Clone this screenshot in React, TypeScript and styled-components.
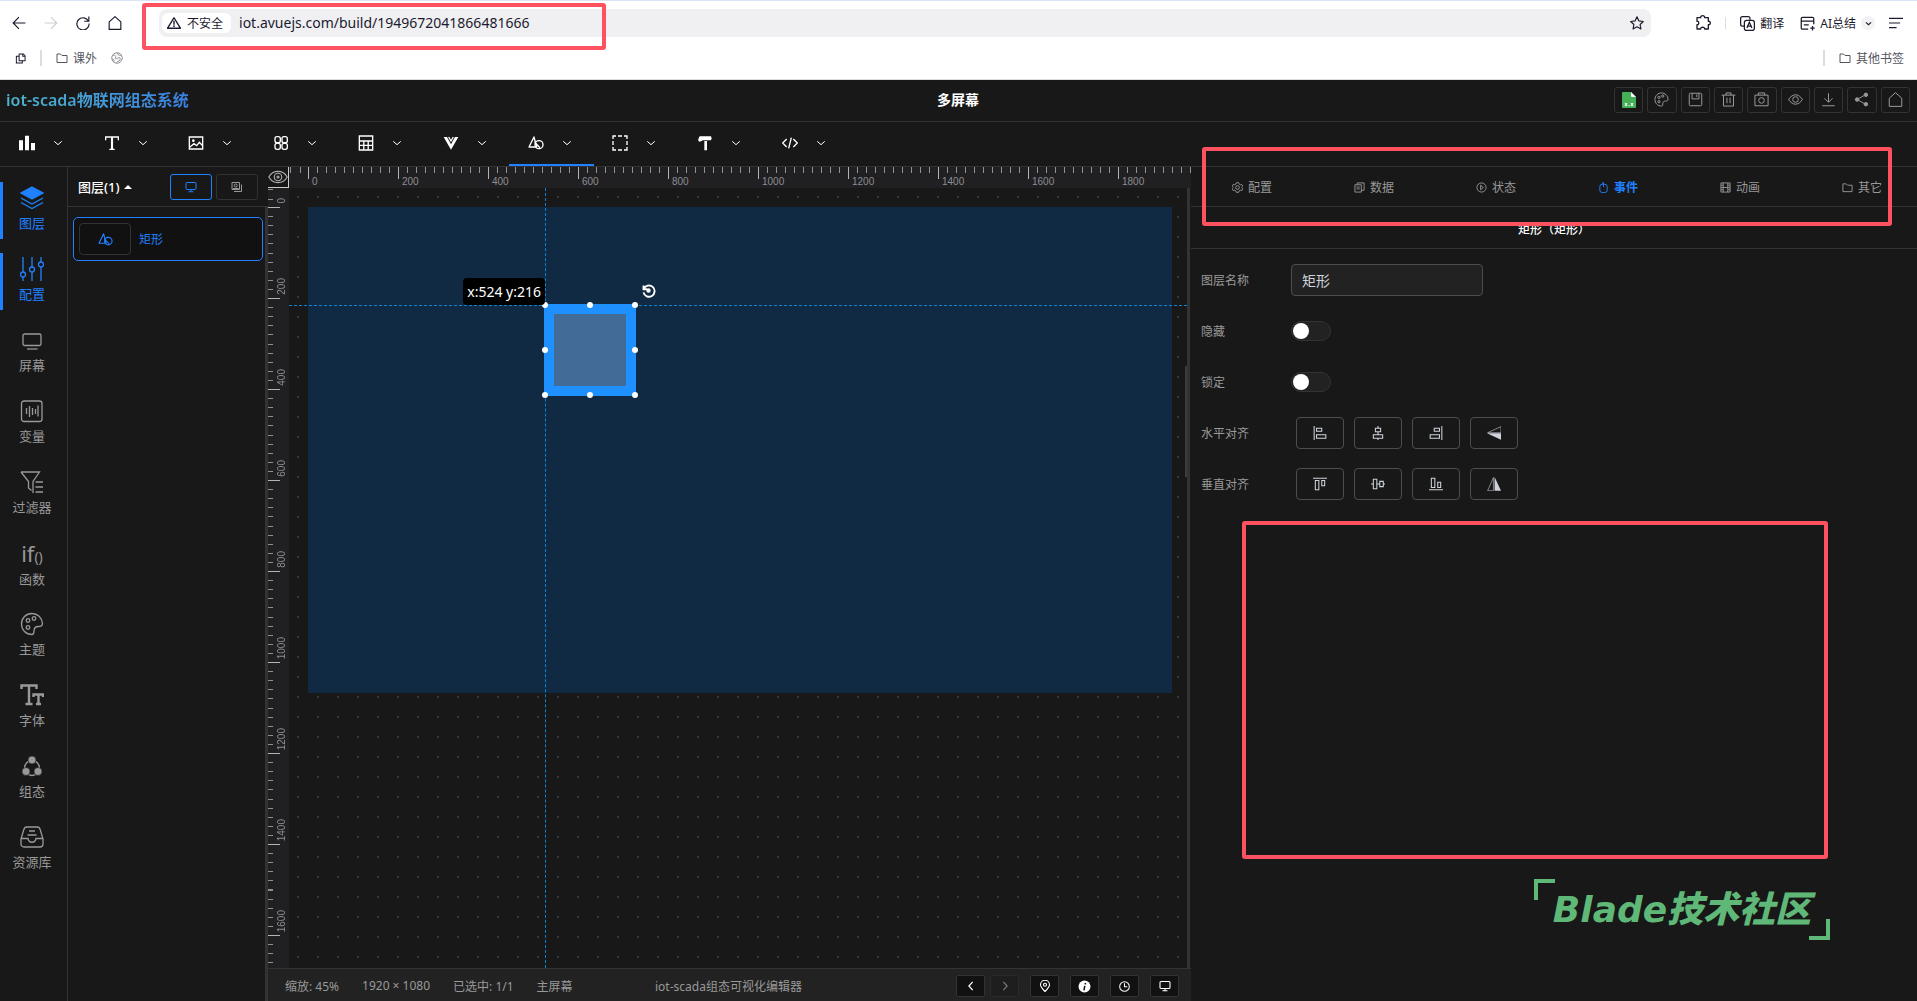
import React, { useState } from "react";
import styled, { createGlobalStyle, css } from "styled-components";

const ACCENT = "#2080ff";
const MARK = "#ff5260";
const LINE = "#333333";

const Global = createGlobalStyle`
  * { box-sizing: border-box; }
  html, body { margin: 0; background: #181818; }
  body, button, input { font-family: "Noto Sans", "Noto Sans CJK SC", sans-serif; }
  button { padding: 0; border: 0; background: none; color: inherit; cursor: pointer; }
  svg { display: block; flex: none; }
`;

/* ---------- icons ---------- */

type IconProps = { size?: number; w?: number; sw?: number; children: React.ReactNode; box?: number };
const Icon = ({ size = 16, w, sw = 1.5, box = 24, children }: IconProps) => (
  <svg width={w ?? size} height={size} viewBox={`0 0 ${box} ${box}`} fill="none" stroke="currentColor" strokeWidth={sw} aria-hidden="true">
    {children}
  </svg>
);

const glyph = {
  back: <path d="M23 12H2M12 2 2 12l10 10" />,
  forward: <path d="M1 12h21M12 2l10 10-10 10" />,
  reload: <path d="M21.5 9A10.5 10.5 0 1 0 22.500 13M22 1v8h-8" />,
  home: <path d="M2 10 12 1l10 9v13H2z" strokeLinejoin="round" />,
  warn: <path d="M12 3 23 21H1zM12 8v7M12 16v3" strokeLinejoin="round" />,
  star: <path d="m12 1.500 3.300 6.900 7.500 1-5.500 5.200 1.400 7.500-6.700-3.700-6.700 3.700 1.400-7.500-5.500-5.200 7.500-1z" strokeLinejoin="round" />,
  puzzle: <path d="M3 4h5.500c-1-4 7-4 6 0H20v5.500c4-1 4 6 0 5V21h-5.500c1-3.500-7-3.500-6 0H3v-6.500c3.500 1 3.500-6 0-5z" strokeLinejoin="round" />,
  translate: (
    <>
      <path d="M7 16H4a3 3 0 0 1-3-3V4a3 3 0 0 1 3-3h9a3 3 0 0 1 3 3v2" />
      <rect x="7" y="7" width="16" height="16" rx="3.500" />
      <path d="m11 19 4-9 4 9M12.500 16h5" />
    </>
  ),
  summary: <path d="M13 21H4a2 2 0 0 1-2-2V4a2 2 0 0 1 2-2h16a2 2 0 0 1 2 2v9M2 8h20M6 14h8M20 16v7M16.500 19.500h7" />,
  menu: <path d="M0 4h24M0 12h19M0 20h13" />,
  chevron: <path d="m3 8 9 8 9-8" />,
  tabs: (
    <>
      <path d="M9 2h9l4 4v11H9z" strokeLinejoin="round" />
      <path d="M9 7H3v15h13v-5M17 2v5h5" />
    </>
  ),
  folder: <path d="M2 21V4h7l3 3h10v14z" strokeLinejoin="round" />,
  globe: (
    <>
      <circle cx="12" cy="12" r="10.500" />
      <path d="M3 7c4-2 8 0 6 4s2 3 5 1 6 0 4 4-6 2-7 5M13 2c-1 4 3 5 8 4M2 14c3 0 4 2 4 6" />
    </>
  ),
  palette: (
    <>
      <path d="M12 1.500C6 1.500 1.500 6 1.500 12S6 22.500 12 22.500c2 0 2-1.500 2-3.500 0-3 1.500-4.500 4.500-4.500 2.500 0 4-.500 4-3C22 5.500 17.500 1.500 12 1.500z" />
      <circle cx="8" cy="8.500" r="1.800" />
      <circle cx="14" cy="6.500" r="1.800" />
      <circle cx="8" cy="15.500" r="1.800" />
    </>
  ),
  save: (
    <>
      <rect x="2" y="2" width="20" height="20" rx="2" />
      <path d="M6.500 2v9h11V2M14 4v4" />
    </>
  ),
  trash: <path d="M1 5h22M8 5V1.500h8V5M4 5v17.500h16V5M9.500 9v9M14.500 9v9" />,
  camera: (
    <>
      <path d="M1.500 5h21v17h-21zM7 5V1.500h10V5" />
      <circle cx="12" cy="13.500" r="4.500" />
    </>
  ),
  eye: (
    <>
      <path d="M1 12c6-10 16-10 22 0-6 10-16 10-22 0z" />
      <circle cx="12" cy="12" r="4.500" />
    </>
  ),
  eyeDot: (
    <>
      <path d="M1 12C6 3 18 3 23 12 18 21 6 21 1 12z" />
      <circle cx="12" cy="12" r="4.500" />
      <circle cx="12" cy="12" r="1.200" />
    </>
  ),
  download: <path d="M12 2v14M5.500 10l6.500 6.500 6.500-6.500M2 22h20" />,
  share: (
    <>
      <path d="M19 4 5 12l14 8" />
      <circle cx="19" cy="4.500" r="2.800" fill="currentColor" />
      <circle cx="5" cy="12" r="2.800" fill="currentColor" />
      <circle cx="19" cy="19.500" r="2.800" fill="currentColor" />
    </>
  ),
  chart: <path d="M0 8h6v15H0zM9 1h6v22H9zM18 12h6v11h-6z" fill="currentColor" stroke="none" />,
  type: (
    <>
      <path d="M2.500 8V3h19v5M8 21.500h8" />
      <path d="M12 3v18" strokeWidth="3.200" />
    </>
  ),
  image: (
    <>
      <path d="M2 3h20v18H2zM3 18l6-5 4 3 4-5 5 5" />
      <circle cx="8" cy="8.500" r="1" />
    </>
  ),
  rings: (
    <>
      <rect x="3" y="2.500" width="8" height="9" rx="3" />
      <rect x="13.500" y="2.500" width="8" height="9" rx="3" />
      <rect x="3" y="12.500" width="8" height="9" rx="3" />
      <rect x="13.500" y="12.500" width="8" height="9" rx="3" />
    </>
  ),
  calc: <path d="M2 1.500h20v21H2zM2 9h20M2 15.500h20M8.700 9v13M15.300 9v13" />,
  vee: (
    <>
      <path d="M1 3h5l6 11 6-11h5L12 22z" fill="currentColor" stroke="none" />
      <path d="M8.500 3 12 9l3.500-6" />
    </>
  ),
  shapes: (
    <>
      <path d="M9 3 1.500 18H13L9 3z" strokeLinejoin="round" />
      <circle cx="16.500" cy="14.500" r="6" />
      <path d="m10 11 8 8" />
    </>
  ),
  marquee: (
    <>
      <path d="M1.500 6V1.500H6M18 1.500h4.500V6M22.500 18v4.500H18M6 22.500H1.500V18" />
      <path d="M9 1.500h6M9 22.500h6M1.500 9v6M22.500 9v6" />
    </>
  ),
  paint: <path d="M4 2h17l1 3-1 3H9L4 10 2 9V6zM11 9h4v14h-4z" fill="currentColor" stroke="none" />,
  code: <path d="m7 6-6 6 6 6M17 6l6 6-6 6M14 4l-4 16" />,
  layers: (
    <>
      <path d="M12 1 23 7 12 13 1 7z" fill="currentColor" />
      <path d="m1 12 11 6 11-6M1 16.500l11 6 11-6" />
    </>
  ),
  sliders: (
    <>
      <path d="M3 0v15M3 20v4M12 0v10M12 15v9M21 0v5M21 10v14" />
      <circle cx="3" cy="17.500" r="2.500" />
      <circle cx="12" cy="12.500" r="2.500" />
      <circle cx="21" cy="7.500" r="2.500" />
    </>
  ),
  screen: (
    <>
      <rect x="3" y="6" width="18" height="11.500" rx="1.500" />
      <path d="M7 21h10.500" />
    </>
  ),
  variable: (
    <>
      <rect x="1.500" y="2" width="20.500" height="20.500" rx="2.500" />
      <path d="M6.500 9v6M9.500 7v11M12.500 9v7M15.500 10v5M18 6.500v11" />
    </>
  ),
  filter: <path d="M1 2h18.500L13 11.500V23M1 2l7.500 9.500V18l3 2.500M15.500 12h7.500M15.500 17h7.500M15.500 22h7.500" />,
  fonts: <path d="M1.500 6V2.500h15V6M9 2.500v18M5.500 21h7M13.500 14v-2.500h9.500V14M18.500 11.500V21M16 21h5" strokeWidth="2.400" />,
  nodes: (
    <>
      <circle cx="12" cy="14" r="7.500" />
      <circle cx="12" cy="6" r="4" fill="currentColor" stroke="#181818" strokeWidth=".6" />
      <circle cx="6" cy="17.500" r="4" fill="currentColor" stroke="#181818" strokeWidth=".6" />
      <circle cx="18" cy="17.500" r="4" fill="currentColor" stroke="#181818" strokeWidth=".6" />
    </>
  ),
  library: (
    <>
      <path d="M1 14 4 4a3 3 0 0 1 3-2h10a3 3 0 0 1 3 2l3 10v5a3 3 0 0 1-3 3H4a3 3 0 0 1-3-3zM1 13.500h7c1 5 7 5 8 0h7" />
      <path d="M9 6h6M7.500 10h9" />
    </>
  ),
  monitor: (
    <>
      <rect x="2" y="3" width="20" height="14" rx="2" />
      <path d="M12 17v4M7 21.500h10" />
    </>
  ),
  group: (
    <>
      <path d="M2 3h15v14H2zM6 21h15V7" />
      <circle cx="9.500" cy="9" r="3" />
      <path d="M4 15h11" />
    </>
  ),
  gear: (
    <>
      <path d="M9.500 1.500h5l1 3 3 1.500 3-.500 2 4-2 2.500 2 2.500-2 4-3-.500-3 1.500-1 3h-5l-1-3-3-1.500-3 .500-2-4 2-2.500-2-2.500 2-4 3 .500 3-1.500z" strokeLinejoin="round" />
      <circle cx="12" cy="12" r="4" />
    </>
  ),
  data: <path d="M2 6h14v16H2zM7 6V2h15v16h-6M5.500 11h7M5.500 15h7" />,
  play: (
    <>
      <circle cx="12" cy="12" r="10" />
      <path d="m10 7 6 5-6 5z" />
    </>
  ),
  mouse: (
    <>
      <rect x="4" y="5" width="16" height="18" rx="5" />
      <path d="M12 1v10M8 2h4" />
    </>
  ),
  film: <path d="M2 2h20v20H2zM7 2v20M17 2v20M7 12h10M2 7h5M2 12h5M2 17h5M17 7h5M17 12h5M17 17h5" />,
  left: <path d="M16 2 7 12l9 10" />,
  right: <path d="m8 2 9 10-9 10" />,
  pin: (
    <>
      <path d="M12 23C6 17 3 13 3 9.500a9 9 0 0 1 18 0C21 13 18 17 12 23z" />
      <circle cx="12" cy="9.500" r="3" />
    </>
  ),
  info: (
    <>
      <circle cx="12" cy="12" r="11" fill="currentColor" stroke="none" />
      <path d="M13.500 5.500v3M12.500 11l-1.500 8" stroke="#111" strokeWidth="2.800" />
    </>
  ),
  clock: (
    <>
      <circle cx="12" cy="12" r="10.500" />
      <path d="M12 5v7.500h6" />
    </>
  ),
  rotate: (
    <>
      <path d="M4 4v6h6M4.500 9.500A9 9 0 1 1 4 15" />
      <circle cx="12" cy="12" r="2" fill="currentColor" />
    </>
  ),
  alLeft: <path d="M2 0v24M6 4h9v5H6zM6 15h16v6H6z" />,
  alCenter: <path d="M12 0v4M12 10v5M12 21v3M7.500 4h9v6h-9zM4 15h16v6H4z" />,
  alRight: <path d="M22 0v24M9 4h9v5H9zM2 15h16v6H2z" />,
  alTop: <path d="M0 2h24M4 6h6v16H4zM15 6h5v9h-5z" />,
  alMiddle: <path d="M0 12h4M10 12h5M21 12h3M4 4h6v16H4zM15 7.500h6v9h-6z" />,
  alBottom: <path d="M0 22h24M4 2h6v16H4zM15 9h5v9h-5z" />,
  flipV: (
    <>
      <path d="M24 1 1 11.500h23z" strokeWidth="1" />
      <path d="M24 23.500 0 12.500h24z" fill="currentColor" stroke="none" />
    </>
  ),
  flipH: (
    <>
      <path d="M1 23.500 11 1v22.500z" strokeWidth="1" />
      <path d="M24 23.500 13 0v23.500z" fill="currentColor" stroke="none" />
    </>
  ),
};
type GlyphName = keyof typeof glyph;

/* ---------- frame ---------- */

const Page = styled.div`
  position: relative;
  display: flex;
  flex-direction: column;
  height: 100vh;
  min-width: 1400px;
  overflow: hidden;
  color: #999;
  background: #181818;
  font-size: 12px;
`;

const Marker = styled.div`
  position: absolute;
  z-index: 5;
  border: 4px solid ${MARK};
  border-radius: 3px;
  pointer-events: none;
`;
const UrlMarker = styled(Marker)`
  top: 3px;
  left: 142px;
  width: 464px;
  height: 47px;
`;
const TabsMarker = styled(Marker)`
  top: -20px;
  left: 11px;
  right: 25px;
  height: 79px;
`;
const AreaMarker = styled(Marker)`
  top: 354px;
  left: 51px;
  right: 89px;
  height: 338px;
`;

/* ---------- browser ---------- */

const Browser = styled.header`
  flex: none;
  height: 80px;
  background: #fff;
  border-top: 1px solid #dbe3f6;
  border-bottom: 1px solid #dcdcdf;
  color: #1c1b2e;
`;
const NavRow = styled.div`
  display: flex;
  align-items: center;
  height: 44px;
  padding: 0 14px 0 12px;
`;
const NavGroup = styled.div`
  display: flex;
  gap: 18px;
  margin-right: 37px;
`;
const NavButton = styled.button<{ $tone?: string }>`
  color: ${(p) => p.$tone ?? "#1c1b2e"};
`;
const Address = styled.div`
  flex: 1;
  display: flex;
  align-items: center;
  gap: 8px;
  height: 28px;
  padding: 0 7px 0 3px;
  border-radius: 8px;
  background: #f0f0f3;
`;
const Unsafe = styled.button`
  display: flex;
  align-items: center;
  gap: 6px;
  height: 20px;
  padding: 0 8px 0 5px;
  border-radius: 6px;
  background: #fff;
  font-size: 12px;
`;
const UrlInput = styled.input`
  flex: 1;
  height: 24px;
  padding: 0 0 2px;
  border: 0;
  outline: 0;
  background: transparent;
  color: #1c1b2e;
  font-size: 14px;
`;
const Extras = styled.div`
  display: flex;
  align-items: center;
  margin-left: 44px;
  gap: 14px;
`;
const Rule = styled.span<{ $h: number; $w?: number }>`
  width: ${(p) => p.$w ?? 1}px;
  height: ${(p) => p.$h}px;
  background: #dddde1;
`;
const TextButton = styled.button`
  display: flex;
  align-items: center;
  gap: 5px;
  font-size: 12px;
`;
const ExtraLink = styled(TextButton)`
  & + & { margin-left: 2px; }
`;
const Round = styled.span`
  display: grid;
  place-items: center;
  width: 14px;
  height: 14px;
  border-radius: 50%;
  background: #f2f2f4;
`;
const Bookmarks = styled.div`
  display: flex;
  align-items: center;
  gap: 14px;
  height: 26px;
  padding: 0 13px 0 15px;
  color: #55555f;
`;
const Spring = styled.span`
  flex: 1;
`;

/* ---------- app header ---------- */

const AppHeader = styled.div`
  flex: none;
  display: grid;
  grid-template-columns: 1fr auto 1fr;
  align-items: center;
  height: 42px;
  padding: 0 7px 2px 6px;
  border-bottom: 1px solid ${LINE};
`;
const Brand = styled.h1`
  justify-self: start;
  margin: 0;
  font-size: 16px;
  line-height: 24px;
  font-weight: 600;
  color: transparent;
  background: linear-gradient(90deg, #4fb6cc, #3a7fe0);
  background-clip: text;
`;
const ProjectName = styled.h2`
  margin: 0;
  color: #fff;
  font-size: 14px;
  line-height: 24px;
  font-weight: 700;
`;
const Actions = styled.div`
  justify-self: end;
  display: grid;
  grid-template-columns: repeat(9, 1fr);
  gap: 4px;
  width: 296px;
`;
const ActionButton = styled.button`
  display: grid;
  place-items: center;
  height: 26px;
  border: 1px solid ${LINE};
  border-radius: 3px;
  color: #999;
`;

const Toolbar = styled.nav`
  flex: none;
  height: 45px;
  border-bottom: 1px solid ${LINE};
`;
const ToolList = styled.div`
  display: flex;
  width: 848px;
  height: 44px;
`;
const ToolButton = styled.button<{ $on?: boolean }>`
  flex: 1;
  display: flex;
  align-items: center;
  justify-content: center;
  gap: 18px;
  padding: 0 3px 0 0;
  color: #fff;
  border-bottom: 2px solid ${(p) => (p.$on ? ACCENT : "transparent")};
`;

/* ---------- workspace ---------- */

const Workspace = styled.div`
  flex: 1;
  min-height: 0;
  display: grid;
  grid-template-columns: 68px 200px minmax(0, 1fr) 726px;
`;
const SideNav = styled.nav`
  display: flex;
  flex-direction: column;
  padding-top: 15px;
  gap: 14px;
  border-right: 1px solid ${LINE};
`;
const SideButton = styled.button<{ $on?: boolean }>`
  display: flex;
  flex-direction: column;
  align-items: center;
  justify-content: space-between;
  height: 57px;
  padding: 4px 6px 6px 0;
  border-left: 3px solid ${(p) => (p.$on ? ACCENT : "transparent")};
  color: ${(p) => (p.$on ? ACCENT : "#999")};
  font-size: 13px;
  line-height: 20px;
`;
const FnMark = styled.span`
  font-size: 22px;
  line-height: 24px;
  small { font-size: 14px; }
`;

const Layers = styled.aside`
  display: flex;
  flex-direction: column;
`;
const LayersHead = styled.div`
  display: flex;
  align-items: center;
  gap: 4px;
  height: 40px;
  padding: 0 10px;
  border-bottom: 1px solid ${LINE};
`;
const LayersTitle = styled.button`
  display: flex;
  align-items: center;
  gap: 4px;
  margin-right: auto;
  color: #fff;
  font-size: 13px;
  font-weight: 500;
`;
const Caret = styled.span`
  border: 4px solid transparent;
  border-top: 0;
  border-bottom-color: #fff;
`;
const ModeButton = styled.button<{ $on?: boolean }>`
  display: grid;
  place-items: center;
  width: 42px;
  height: 26px;
  border: 1px solid ${(p) => (p.$on ? ACCENT : LINE)};
  border-radius: 3px;
  color: ${(p) => (p.$on ? ACCENT : "#999")};
`;
const LayersBody = styled.div`
  flex: 1;
  padding: 10px 2px 0 5px;
  border-right: 3px solid ${LINE};
`;
const LayerItem = styled.button`
  display: flex;
  align-items: center;
  gap: 8px;
  width: 100%;
  height: 44px;
  padding: 0 5px;
  border: 1px solid ${ACCENT};
  border-radius: 5px;
  background: #111;
  color: ${ACCENT};
  font-size: 12px;
`;
const LayerThumb = styled.span`
  display: grid;
  place-items: center;
  width: 52px;
  height: 32px;
  border: 1px solid ${LINE};
  border-radius: 4px;
`;

/* ---------- stage ---------- */

const Stage = styled.main`
  display: grid;
  grid-template-columns: 21px minmax(0, 1fr);
  grid-template-rows: 21px minmax(0, 1fr) 33px;
  min-height: 0;
`;
const Corner = styled.button`
  display: grid;
  place-items: center;
  color: #aaa;
  border-right: 1px solid #ccc;
  border-bottom: 1px solid #ccc;
`;
const rulerText = css`
  color: #8d8d92;
  font-family: "Liberation Sans", Arial, sans-serif;
  font-size: 10px;
  line-height: 10px;
`;
const RulerX = styled.div`
  display: flex;
  overflow: hidden;
  background: #202023;
  ${rulerText}
`;
const LeadX = styled.span`
  flex: none;
  width: 19px;
  background: repeating-linear-gradient(90deg, transparent 0 1px, #909090 1px 2px, transparent 2px 10px) 0 0 / 100% 6px no-repeat;
`;
const SegmentX = styled.span`
  flex: none;
  width: 90px;
  padding: 10px 0 0 4px;
  background:
    linear-gradient(#b4b4b4, #b4b4b4) 0 0 / 1px 12px no-repeat,
    repeating-linear-gradient(90deg, #909090 0 1px, transparent 1px 9px) 0 0 / 100% 6px no-repeat;
`;
const RulerY = styled.div`
  display: flex;
  flex-direction: column;
  overflow: hidden;
  background: #202023;
  ${rulerText}
`;
const SegmentY = styled.span<{ $lead?: boolean }>`
  flex: none;
  display: flex;
  align-items: flex-end;
  height: ${(p) => (p.$lead ? 19 : 91)}px;
  padding: 0 0 3px 9px;
  background: ${(p) =>
    p.$lead
      ? "repeating-linear-gradient(transparent 0 1px, #909090 1px 2px, transparent 2px 10px) 0 0 / 5px 100% no-repeat"
      : "linear-gradient(#b4b4b4, #b4b4b4) 0 0 / 12px 1px no-repeat, repeating-linear-gradient(#909090 0 1px, transparent 1px 10%) 0 0 / 5px 100% no-repeat"};
`;
const Upright = styled.span`
  writing-mode: vertical-rl;
  transform: rotate(180deg);
`;
const Viewport = styled.div`
  position: relative;
  overflow: hidden;
  margin-right: 1px;
  border-right: 3px solid ${LINE};
  background: radial-gradient(circle at 9px 9px, #383838 1px, transparent 1px) 0 0 / 20px 20px;
`;
const ScrollThumb = styled.span`
  position: absolute;
  z-index: 3;
  right: 0;
  top: 178px;
  width: 2px;
  height: 111px;
  background: #3c3c3c;
`;
const Artboard = styled.div`
  position: absolute;
  left: 19px;
  top: 19px;
  width: 864px;
  height: 486px;
  background: #0f2a42;
`;
const GuideX = styled.div`
  position: absolute;
  left: 0;
  right: 0;
  top: 117px;
  border-top: 1px dashed #0f83cf;
`;
const GuideY = styled.div`
  position: absolute;
  top: 0;
  bottom: 0;
  left: 256px;
  border-left: 1px dashed #0f83cf;
`;
const Shape = styled.div`
  position: absolute;
  left: 255px;
  top: 116px;
  width: 92px;
  height: 92px;
  border: 10px solid #1e90ff;
  background: #426c97;
`;
const Handle = styled.i<{ $x: number; $y: number }>`
  position: absolute;
  left: ${(p) => p.$x * 45 - 12}px;
  top: ${(p) => p.$y * 45 - 12}px;
  width: 6px;
  height: 6px;
  border-radius: 50%;
  background: #fff;
`;
const Coords = styled.span`
  position: absolute;
  right: 81px;
  bottom: 81px;
  height: 27px;
  padding: 0 4px;
  border-radius: 4px;
  background: #000;
  color: #fff;
  font-size: 14px;
  line-height: 27px;
  white-space: nowrap;
`;
const Rotate = styled.button`
  position: absolute;
  left: 87px;
  top: -31px;
  color: #fff;
`;

const StatusBar = styled.footer`
  grid-column: 1 / -1;
  display: flex;
  align-items: center;
  padding: 2px 12px 0 17px;
  border-top: 1px solid ${LINE};
  background: #222;
  font-size: 12px;
  white-space: nowrap;
`;
const StatusFacts = styled.div`
  display: flex;
  gap: 23px;
  width: 370px;
`;
const StatusTools = styled.div`
  display: flex;
  gap: 11px;
  margin-left: auto;
`;
const Pager = styled.div`
  display: flex;
  gap: 5px;
`;
const StatusButton = styled.button`
  display: grid;
  place-items: center;
  width: 29px;
  height: 22px;
  border: 1px solid ${LINE};
  border-radius: 2px;
  background: #111;
  color: #fff;
  &:disabled { background: #1e1e1e; color: #777; border-color: #2a2a2a; }
`;

/* ---------- inspector ---------- */

const Inspector = styled.aside`
  position: relative;
`;
const Tabs = styled.div`
  display: grid;
  grid-template-columns: repeat(6, 122px);
  height: 40px;
  overflow: hidden;
  border-bottom: 1px solid ${LINE};
`;
const Tab = styled.button<{ $on?: boolean }>`
  display: flex;
  align-items: center;
  justify-content: center;
  gap: 5px;
  padding-top: 1px;
  color: ${(p) => (p.$on ? ACCENT : "#999")};
  font-size: 12px;
  font-weight: ${(p) => (p.$on ? 700 : 400)};
`;
const InspectorTitle = styled.h3`
  margin: 0;
  height: 42px;
  padding-top: 4px;
  border-bottom: 1px solid ${LINE};
  color: #fff;
  font-size: 12px;
  line-height: 38px;
  font-weight: 500;
  text-align: center;
`;
const Form = styled.form`
  display: grid;
  gap: 19px;
  padding: 15px 10px;
`;
const Row = styled.div`
  display: grid;
  grid-template-columns: 90px 1fr;
  align-items: center;
  height: 32px;
`;
const RowLabel = styled.label`
  font-size: 12px;
`;
const TextInput = styled.input`
  width: 192px;
  height: 32px;
  padding: 0 10px;
  border: 1px solid #4c4d4f;
  border-radius: 4px;
  background: #222;
  color: #cfd3dc;
  font-size: 14px;
`;
const Switch = styled.input`
  appearance: none;
  display: flex;
  align-items: center;
  width: 40px;
  height: 20px;
  margin: 0;
  padding: 0 1px;
  border: 1px solid ${LINE};
  border-radius: 10px;
  background: #222;
  &::before {
    content: "";
    width: 16px;
    height: 16px;
    border-radius: 50%;
    background: #fff;
  }
  &:checked { justify-content: flex-end; background: ${ACCENT}; }
`;
const AlignGroup = styled.div`
  display: flex;
  gap: 10px;
  padding-left: 5px;
`;
const AlignButton = styled.button`
  display: grid;
  place-items: center;
  width: 48px;
  height: 32px;
  border: 1px solid #4c4d4f;
  border-radius: 4px;
  color: #cfd3dc;
`;
const Watermark = styled.div`
  position: absolute;
  top: 712px;
  right: 87px;
  width: 296px;
  height: 61px;
  color: #5fb878;
  font-family: "DejaVu Sans", "Noto Sans CJK SC", sans-serif;
  font-size: 36px;
  line-height: 62px;
  font-weight: 900;
  font-style: italic;
  text-align: center;
  white-space: nowrap;
  &::before, &::after {
    content: "";
    position: absolute;
    width: 17px;
    height: 17px;
    border: 0 solid #5fb878;
  }
  &::before { top: 0; left: 0; border-width: 4px 0 0 4px; }
  &::after { right: 0; bottom: 0; border-width: 0 4px 4px 0; }
`;

/* ---------- data ---------- */

const tools: [GlyphName, string][] = [
  ["chart", "图表"], ["type", "文字"], ["image", "图片"], ["rings", "图标"], ["calc", "表格"],
  ["vee", "组件"], ["shapes", "图形"], ["marquee", "边框"], ["paint", "装饰"], ["code", "代码"],
];
const actions: [GlyphName, string][] = [
  ["palette", "主题"], ["save", "保存"], ["trash", "删除"], ["camera", "截图"],
  ["eye", "预览"], ["download", "导出"], ["share", "分享"], ["home", "首页"],
];
const sideItems: [GlyphName | "fn", string][] = [
  ["layers", "图层"], ["sliders", "配置"], ["screen", "屏幕"], ["variable", "变量"], ["filter", "过滤器"],
  ["fn", "函数"], ["palette", "主题"], ["fonts", "字体"], ["nodes", "组态"], ["library", "资源库"],
];
const tabs: [GlyphName, string][] = [
  ["gear", "配置"], ["data", "数据"], ["play", "状态"], ["mouse", "事件"], ["film", "动画"], ["folder", "其它"],
];
const handles = [[0, 0], [1, 0], [2, 0], [0, 1], [2, 1], [0, 2], [1, 2], [2, 2]];
const steps = (n: number) => Array.from({ length: n }, (_, i) => i * 200);

const SheetIcon = () => (
  <svg width="14" height="16" viewBox="0 0 14 16" aria-hidden="true">
    <path d="M1 0h8l5 5v10a1 1 0 0 1-1 1H1a1 1 0 0 1-1-1V1a1 1 0 0 1 1-1z" fill="#45b058" />
    <path d="M9 0v4a1 1 0 0 0 1 1h4z" fill="#fff" />
    <path d="m3 11 2 3M5 11l-2 3M6.500 13.500h1M9 11l2 3M11 11l-2 3" stroke="#fff" strokeWidth="1" />
  </svg>
);

export default function App() {
  const [tab, setTab] = useState(3);
  const [name, setName] = useState("矩形");
  return (
    <Page>
      <Global />
      <UrlMarker />
      <Browser>
        <NavRow>
          <NavGroup>
            <NavButton aria-label="后退"><Icon size={14} sw={2}>{glyph.back}</Icon></NavButton>
            <NavButton aria-label="前进" $tone="#cfcfd4"><Icon size={14} sw={2}>{glyph.forward}</Icon></NavButton>
            <NavButton aria-label="刷新"><Icon size={14} sw={2}>{glyph.reload}</Icon></NavButton>
            <NavButton aria-label="主页"><Icon size={14} sw={2}>{glyph.home}</Icon></NavButton>
          </NavGroup>
          <Address>
            <Unsafe><Icon size={14} sw={2.4}>{glyph.warn}</Icon>不安全</Unsafe>
            <UrlInput aria-label="地址" defaultValue="iot.avuejs.com/build/1949672041866481666" />
            <NavButton aria-label="收藏"><Icon size={14} sw={2}>{glyph.star}</Icon></NavButton>
          </Address>
          <Extras>
            <NavButton aria-label="扩展"><Icon size={16} sw={2}>{glyph.puzzle}</Icon></NavButton>
            <Rule $h={12} />
            <ExtraLink><Icon size={15} sw={2}>{glyph.translate}</Icon>翻译</ExtraLink>
            <ExtraLink><Icon size={15} sw={2}>{glyph.summary}</Icon>AI总结<Round><Icon size={7} sw={4}>{glyph.chevron}</Icon></Round></ExtraLink>
            <NavButton aria-label="菜单"><Icon size={14} sw={2}>{glyph.menu}</Icon></NavButton>
          </Extras>
        </NavRow>
        <Bookmarks>
          <NavButton aria-label="标签页"><Icon size={11} sw={2.2}>{glyph.tabs}</Icon></NavButton>
          <Rule $h={16} $w={2} />
          <TextButton><Icon size={12} sw={2}>{glyph.folder}</Icon>课外</TextButton>
          <NavButton aria-label="网站" $tone="#909096"><Icon size={12} sw={2}>{glyph.globe}</Icon></NavButton>
          <Spring />
          <Rule $h={16} $w={2} />
          <TextButton><Icon size={12} sw={2}>{glyph.folder}</Icon>其他书签</TextButton>
        </Bookmarks>
      </Browser>

      <AppHeader>
        <Brand>iot-scada物联网组态系统</Brand>
        <ProjectName>多屏幕</ProjectName>
        <Actions>
          <ActionButton aria-label="表格"><SheetIcon /></ActionButton>
          {actions.map(([g, label]) => (
            <ActionButton key={label} aria-label={label}><Icon size={15} sw={1.6}>{glyph[g]}</Icon></ActionButton>
          ))}
        </Actions>
      </AppHeader>

      <Toolbar>
        <ToolList>
          {tools.map(([g, label]) => (
            <ToolButton key={label} aria-label={label} $on={g === "shapes"}>
              <Icon size={16} sw={2}>{glyph[g]}</Icon>
              <Icon size={10} sw={2.4}>{glyph.chevron}</Icon>
            </ToolButton>
          ))}
        </ToolList>
      </Toolbar>

      <Workspace>
        <SideNav>
          {sideItems.map(([g, label], i) => (
            <SideButton key={label} $on={i < 2}>
              {g === "fn" ? <FnMark aria-hidden="true">if<small>()</small></FnMark> : <Icon size={24} sw={1.3}>{glyph[g]}</Icon>}
              {label}
            </SideButton>
          ))}
        </SideNav>

        <Layers>
          <LayersHead>
            <LayersTitle>图层(1)<Caret /></LayersTitle>
            <ModeButton $on aria-label="屏幕"><Icon size={12} sw={2}>{glyph.monitor}</Icon></ModeButton>
            <ModeButton aria-label="分组"><Icon size={12} sw={2}>{glyph.group}</Icon></ModeButton>
          </LayersHead>
          <LayersBody>
            <LayerItem>
              <LayerThumb><Icon size={15} sw={1.8}>{glyph.shapes}</Icon></LayerThumb>
              矩形
            </LayerItem>
          </LayersBody>
        </Layers>

        <Stage>
          <Corner aria-label="显示参考线"><Icon size={20} sw={1.4}>{glyph.eyeDot}</Icon></Corner>
          <RulerX>
            <LeadX />
            {steps(10).map((n) => <SegmentX key={n}>{n}</SegmentX>)}
          </RulerX>
          <RulerY>
            <SegmentY $lead><Upright>0</Upright></SegmentY>
            {steps(8).map((n) => <SegmentY key={n}><Upright>{n + 200}</Upright></SegmentY>)}
            <SegmentY />
          </RulerY>
          <Viewport>
            <Artboard />
            <GuideX />
            <GuideY />
            <Shape>
              {handles.map(([x, y]) => <Handle key={`${x}${y}`} $x={x} $y={y} />)}
              <Coords>x:524 y:216</Coords>
              <Rotate aria-label="旋转"><Icon size={15} sw={3}>{glyph.rotate}</Icon></Rotate>
            </Shape>
            <ScrollThumb />
          </Viewport>
          <StatusBar>
            <StatusFacts>
              <span>缩放: 45%</span>
              <span>1920 × 1080</span>
              <span>已选中: 1/1</span>
              <span>主屏幕</span>
            </StatusFacts>
            <span>iot-scada组态可视化编辑器</span>
            <StatusTools>
              <Pager>
                <StatusButton aria-label="上一步"><Icon size={10} sw={3}>{glyph.left}</Icon></StatusButton>
                <StatusButton aria-label="下一步" disabled><Icon size={10} sw={3}>{glyph.right}</Icon></StatusButton>
              </Pager>
              <StatusButton aria-label="定位"><Icon size={12} sw={2.2}>{glyph.pin}</Icon></StatusButton>
              <StatusButton aria-label="信息"><Icon size={13}>{glyph.info}</Icon></StatusButton>
              <StatusButton aria-label="历史"><Icon size={11} sw={2.2}>{glyph.clock}</Icon></StatusButton>
              <StatusButton aria-label="屏幕"><Icon size={12} sw={2.2}>{glyph.monitor}</Icon></StatusButton>
            </StatusTools>
          </StatusBar>
        </Stage>

        <Inspector>
          <TabsMarker />
          <AreaMarker />
          <Tabs role="tablist">
            {tabs.map(([g, label], i) => (
              <Tab key={label} role="tab" aria-selected={i === tab} $on={i === tab} onClick={() => setTab(i)}>
                <Icon size={11} sw={2}>{glyph[g]}</Icon>{label}
              </Tab>
            ))}
          </Tabs>
          <InspectorTitle>矩形（矩形）</InspectorTitle>
          <Form onSubmit={(e) => e.preventDefault()}>
            <Row>
              <RowLabel htmlFor="layer-name">图层名称</RowLabel>
              <TextInput id="layer-name" value={name} onChange={(e) => setName(e.target.value)} />
            </Row>
            <Row>
              <RowLabel htmlFor="layer-hidden">隐藏</RowLabel>
              <Switch id="layer-hidden" type="checkbox" role="switch" />
            </Row>
            <Row>
              <RowLabel htmlFor="layer-locked">锁定</RowLabel>
              <Switch id="layer-locked" type="checkbox" role="switch" />
            </Row>
            <Row>
              <RowLabel as="span" id="h-align">水平对齐</RowLabel>
              <AlignGroup role="group" aria-labelledby="h-align">
                {(["alLeft", "alCenter", "alRight", "flipV"] as GlyphName[]).map((g) => (
                  <AlignButton key={g} type="button" aria-label={g}><Icon size={14} sw={1.8}>{glyph[g]}</Icon></AlignButton>
                ))}
              </AlignGroup>
            </Row>
            <Row>
              <RowLabel as="span" id="v-align">垂直对齐</RowLabel>
              <AlignGroup role="group" aria-labelledby="v-align">
                {(["alTop", "alMiddle", "alBottom", "flipH"] as GlyphName[]).map((g) => (
                  <AlignButton key={g} type="button" aria-label={g}><Icon size={14} sw={1.8}>{glyph[g]}</Icon></AlignButton>
                ))}
              </AlignGroup>
            </Row>
          </Form>
          <Watermark>Blade技术社区</Watermark>
        </Inspector>
      </Workspace>
    </Page>
  );
}
